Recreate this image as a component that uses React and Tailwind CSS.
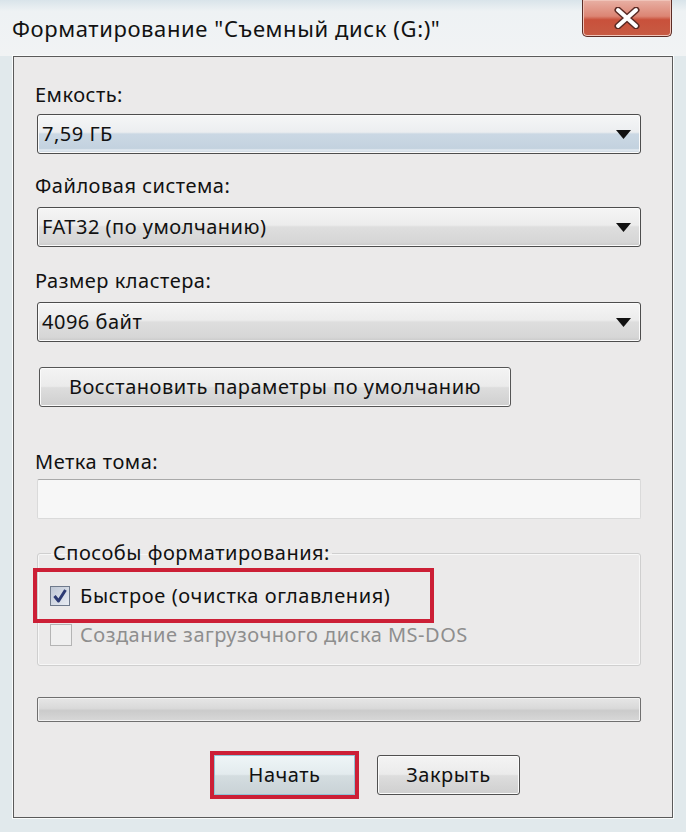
import { useState } from "react";

const font = { fontFamily: '"Noto Sans", "Open Sans", sans-serif' };

function Arrow() {
  return (
    <svg width="15" height="9" viewBox="0 0 15 9" className="shrink-0">
      <path d="M0 0 H15 L7.5 9 Z" fill="#111" />
    </svg>
  );
}

function Combo({ value, active }) {
  return (
    <div
      className={`flex h-[40px] w-[604px] items-center justify-between rounded-[3px] border border-[#4d4d4d] pl-[4px] pr-[9px] text-[20px] tracking-[0.5px] text-[#111] shadow-[inset_0_0_0_1px_#fbfbfb] ${
        active
          ? "bg-[linear-gradient(180deg,#f5f6f7_0%,#eceef0_45%,#cbd8e4_50%,#c3d2df_88%,#e4ebf1_92%,#c3d0dc_100%)]"
          : "bg-[linear-gradient(180deg,#f5f5f5_0%,#ececec_45%,#dedede_50%,#d6d6d6_90%,#c9c9c9_100%)]"
      }`}
    >
      <span className="leading-[24px]">{value}</span>
      <Arrow />
    </div>
  );
}

function Label({ children, className = "" }) {
  return (
    <div className={`-ml-[2px] h-[24px] text-[20px] leading-[24px] tracking-[0.5px] text-[#111] ${className}`}>
      {children}
    </div>
  );
}

export default function App() {
  const [quick, setQuick] = useState(true);

  return (
    <div className="flex h-[832px] w-[686px] flex-col bg-[#e1e9ec]" style={font}>
      {/* Title bar */}
      <div className="flex h-[56px] shrink-0 items-start justify-between bg-[linear-gradient(180deg,#d9e4ea_0%,#eef2f4_20%,#f1f3f4_100%)] pl-[12px] pr-[14px]">
        <div className="pt-[15px] text-[22px] leading-[26px] tracking-[0.6px] text-[#121212]">
          Форматирование "Съемный диск (G:)"
        </div>
        <div className="flex h-[37px] w-[90px] items-center justify-center rounded-b-[5px] border border-t-0 border-[#5c2d26] bg-[linear-gradient(180deg,#e8b0a4_0%,#dc8574_45%,#c9513b_55%,#c75b43_100%)] shadow-[inset_0_0_0_1px_#f0c4b9]">
          <svg width="28" height="22" viewBox="0 0 28 22">
            <path d="M5 3 L23 19 M23 3 L5 19" stroke="#5a2a24" strokeWidth="7" strokeLinecap="round" />
            <path d="M5 3 L23 19 M23 3 L5 19" stroke="#ffffff" strokeWidth="4" strokeLinecap="round" />
          </svg>
        </div>
      </div>

      {/* Client area */}
      <div className="mx-[13px] flex h-[762px] shrink-0 flex-col border border-[#5a5a5a] bg-[#ebeaea] pl-[23px] pt-[26px] shadow-[0_0_0_1px_#fafcfc]">
        <Label>Емкость:</Label>
        <div className="mt-[7px]">
          <Combo value="7,59 ГБ" active />
        </div>

        <Label className="mt-[20px]">Файловая система:</Label>
        <div className="mt-[9px]">
          <Combo value="FAT32 (по умолчанию)" />
        </div>

        <Label className="mt-[22px]">Размер кластера:</Label>
        <div className="mt-[9px]">
          <Combo value="4096 байт" />
        </div>

        <button className="ml-[2px] mt-[25px] flex h-[40px] w-[472px] items-center justify-center rounded-[3px] border border-[#555] bg-[linear-gradient(180deg,#f4f4f4_0%,#ebebeb_48%,#dddddd_52%,#cfcfcf_100%)] text-[20px] leading-[24px] tracking-[0.5px] text-[#111] shadow-[inset_0_0_0_1px_#fbfbfb]">
          Восстановить параметры по умолчанию
        </button>

        <Label className="mt-[43px]">Метка тома:</Label>
        <div className="mt-[5px] h-[40px] w-[604px] rounded-[2px] border border-[#dadada] border-t-[#a9a9a9] bg-[#f7f7f7]" />

        <fieldset className="mt-[22px] w-[604px] rounded-[3px] border border-[#cfcfcf] p-0 shadow-[inset_0_0_0_1px_#f7f7f7]">
          <legend className="ml-[13px] px-[2px] text-[20px] leading-[24px] tracking-[0.5px] text-[#111]">
            Способы форматирования:
          </legend>
          <div className="-ml-[5px] mt-[3px] flex h-[55px] w-[401px] items-center border-4 border-[#cc1f36] pl-[13px]">
            <button
              onClick={() => setQuick(!quick)}
              className="flex h-[20px] w-[20px] items-center justify-center border border-[#6f7a8c] bg-[linear-gradient(135deg,#bfc7d5_0%,#e8ecf3_100%)]"
            >
              {quick && (
                <svg width="16" height="16" viewBox="0 0 16 16">
                  <path d="M2.5 8 L6.5 13 L13.5 2" fill="none" stroke="#2c3a73" strokeWidth="3" strokeLinejoin="round" />
                </svg>
              )}
            </button>
            <span className="ml-[10px] text-[20px] leading-[24px] tracking-[0.6px] text-[#111]">
              Быстрое (очистка оглавления)
            </span>
          </div>
          <div className="flex h-[24px] items-center pl-[12px]">
            <div className="h-[22px] w-[22px] border border-[#b4b4b4] bg-[#efefef]" />
            <span className="ml-[8px] text-[20px] leading-[24px] tracking-[0.5px] text-[#8e8e8e]">
              Создание загрузочного диска MS-DOS
            </span>
          </div>
          <div className="h-[18px]" />
        </fieldset>

        <div className="mt-[31px] h-[25px] w-[604px] rounded-[2px] border border-[#6f6f6f] bg-[linear-gradient(180deg,#e6e6e6_0%,#d9d9d9_45%,#cbcbcb_55%,#d8d8d8_100%)] shadow-[inset_0_0_0_1px_#f2f2f2]" />

        <div className="ml-[173px] mt-[29px] flex items-center gap-[18px]">
          <div className="border-4 border-[#cc1f36]">
            <button className="flex h-[40px] w-[141px] items-center justify-center border border-[#8fc3d6] bg-[linear-gradient(180deg,#eef5f7_0%,#e3ebee_48%,#d4dde0_52%,#c9d2d6_100%)] text-[20px] leading-[24px] tracking-[0.5px] text-[#111]">
              Начать
            </button>
          </div>
          <button className="flex h-[40px] w-[143px] items-center justify-center rounded-[3px] border border-[#505050] bg-[linear-gradient(180deg,#f4f4f4_0%,#ebebeb_48%,#dddddd_52%,#cfcfcf_100%)] text-[20px] leading-[24px] tracking-[0.5px] text-[#111] shadow-[inset_0_0_0_1px_#fbfbfb]">
            Закрыть
          </button>
        </div>
      </div>
    </div>
  );
}
